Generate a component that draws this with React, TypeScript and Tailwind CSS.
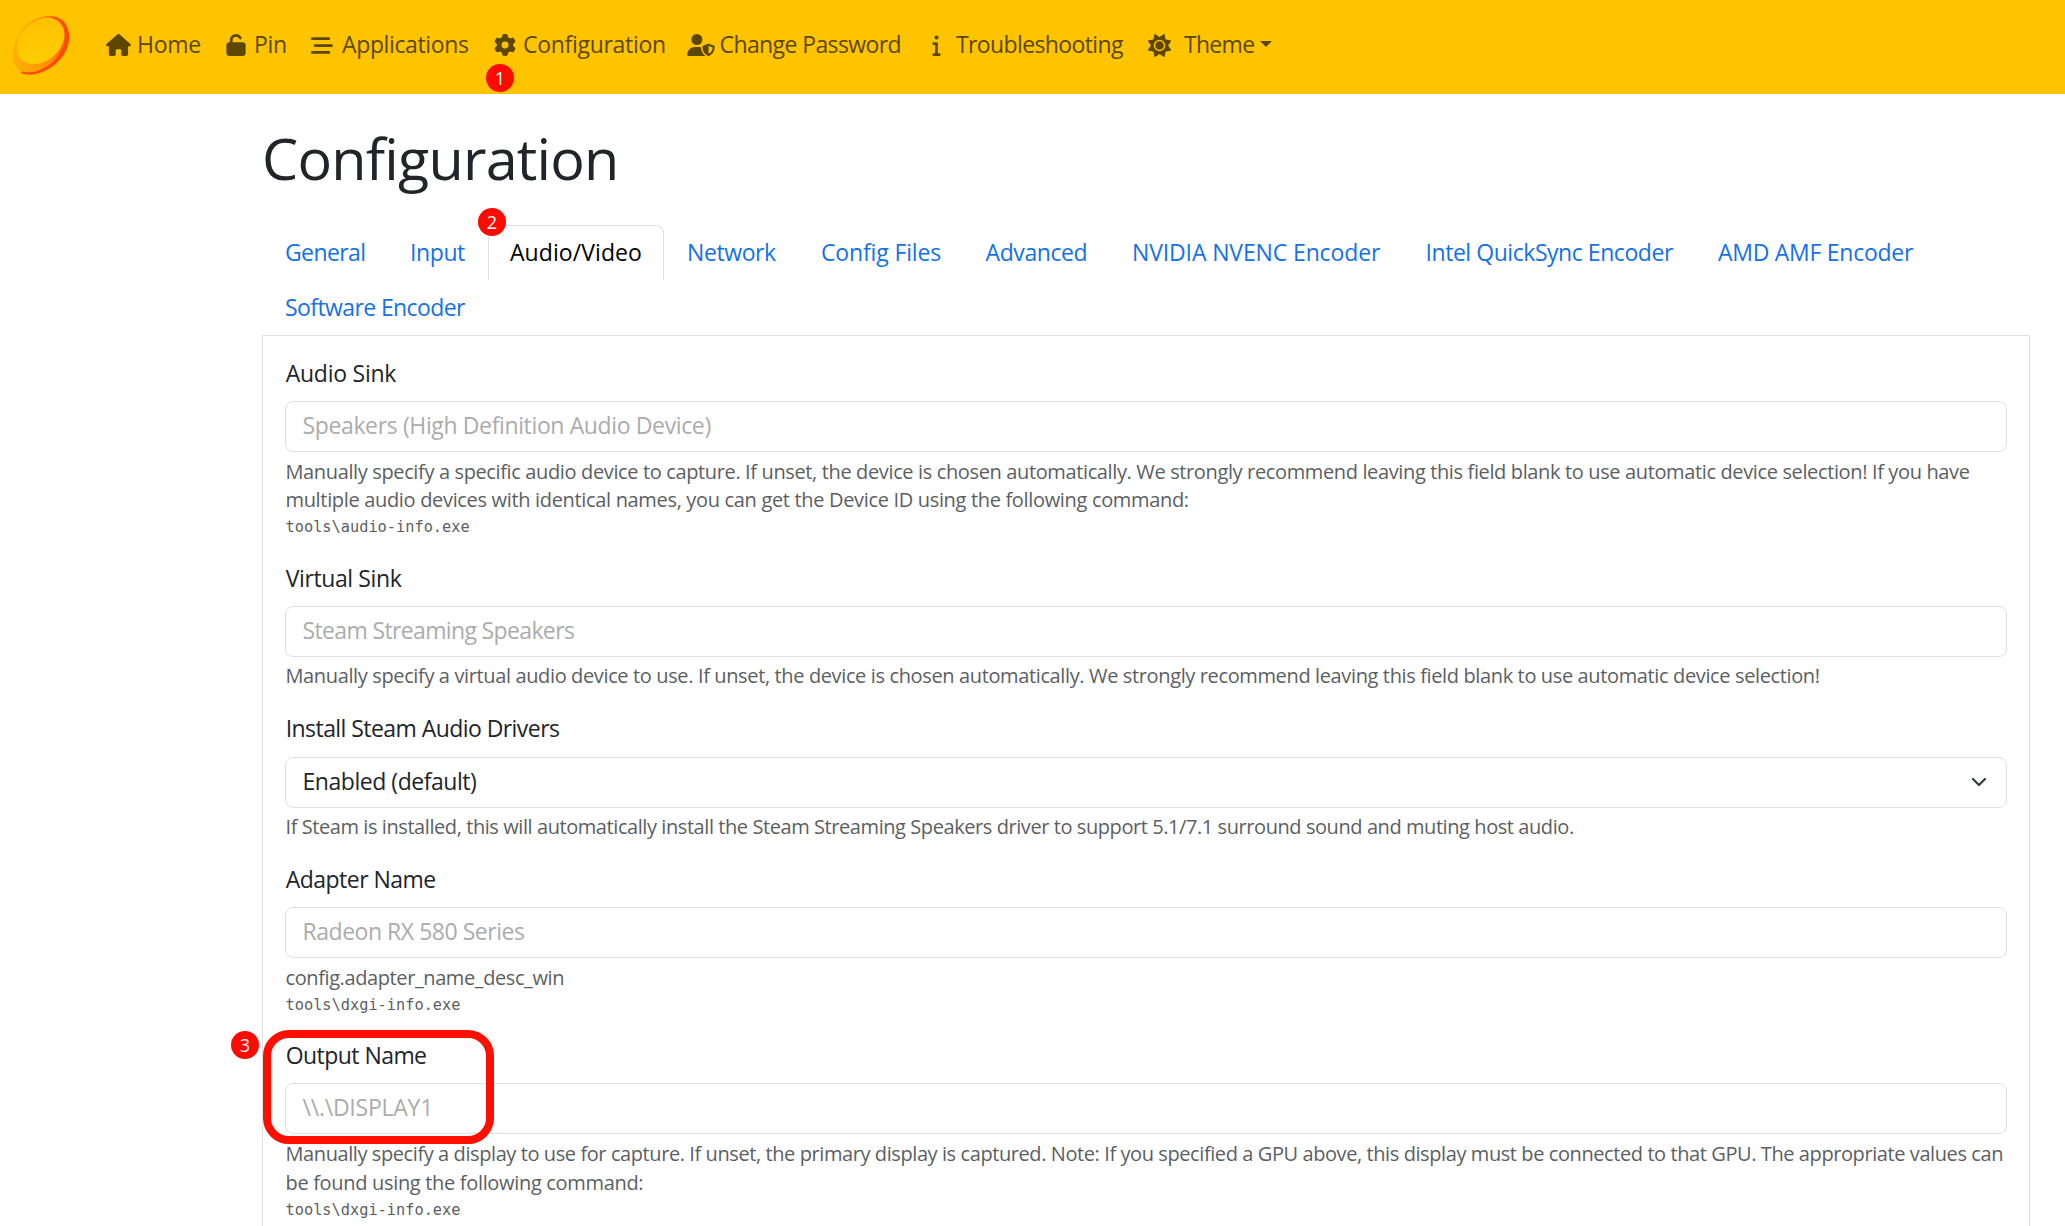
import React from "react";
import type { ReactNode } from "react";
import {
  FaHouse,
  FaUnlock,
  FaBarsStaggered,
  FaGear,
  FaUserShield,
  FaInfo,
  FaSun,
} from "react-icons/fa6";

type NavEntry = { label: string; icon: ReactNode; item: string; slot: string; text: string };

const navEntries: NavEntry[] = [
  { label: "Home", icon: <FaHouse className="h-[22px] w-[25px]" />, item: "w-[120px]", slot: "w-[31px]", text: "tracking-[-0.3px]" },
  { label: "Pin", icon: <FaUnlock className="h-[22px] w-[20px]" />, item: "w-[85px]", slot: "w-[28px]", text: "tracking-[-0.3px]" },
  { label: "Applications", icon: <FaBarsStaggered className="h-[25px] w-[22px]" />, item: "w-[183px]", slot: "w-[31px]", text: "tracking-[-0.37px]" },
  { label: "Configuration", icon: <FaGear className="h-[22px] w-[22px]" />, item: "w-[193px]", slot: "w-[29px]", text: "tracking-[-0.3px]" },
  { label: "Change Password", icon: <FaUserShield className="h-[22px] w-[28px]" />, item: "w-[245px]", slot: "w-[32.5px]", text: "tracking-[-0.6px]" },
  { label: "Troubleshooting", icon: <FaInfo className="h-[22px] w-[9px]" />, item: "w-[216px]", slot: "w-[24px]", text: "tracking-[-0.62px]" },
  { label: "Theme", icon: <FaSun className="h-[23px] w-[23px]" />, item: "w-[130px]", slot: "w-[36px]", text: "tracking-[-0.7px]" },
];

const tabs = [
  { label: "General", cls: "w-[125px] tracking-[-0.6px]" },
  { label: "Input", cls: "w-[101px] tracking-[-0.4px]" },
  { label: "Audio/Video", cls: "w-[176px] tracking-[0.07px]" },
  { label: "Network", cls: "w-[134px] tracking-[-0.4px]" },
  { label: "Config Files", cls: "w-[164.5px] tracking-[-0.14px]" },
  { label: "Advanced", cls: "w-[146.5px] tracking-[-0.4px]" },
  { label: "NVIDIA NVENC Encoder", cls: "w-[293.5px] tracking-[-0.13px]" },
  { label: "Intel QuickSync Encoder", cls: "w-[292.5px] tracking-[-0.45px]" },
  { label: "AMD AMF Encoder", cls: "w-[240px] tracking-[-0.27px]" },
  { label: "Software Encoder", cls: "w-[225px] tracking-[-0.6px]" },
];

function SunshineLogo() {
  return (
    <svg viewBox="0 0 60 62" className="ml-[12px] mt-[-3px] h-[62px] w-[60px]">
      <defs>
        <linearGradient id="rim" x1="0" y1="0.6" x2="1" y2="0.4">
          <stop offset="0.1" stopColor="#ffab06" />
          <stop offset="0.7" stopColor="#ff8a08" />
          <stop offset="1" stopColor="#ff6a00" />
        </linearGradient>
        <linearGradient id="face" x1="0" y1="1" x2="1" y2="0">
          <stop offset="0" stopColor="#ffd000" />
          <stop offset="1" stopColor="#ffbe04" />
        </linearGradient>
      </defs>
      <path d="M21 6C38-3 55 1 57 19C60 44 28 66 9 58Z" fill="#ff4a00" />
      <path d="M20 6C37-3 52 3 53 19C54 43 26 63 9 56C-4 50-1 19 20 6Z" fill="url(#rim)" />
      <ellipse cx="28.5" cy="26" rx="26.5" ry="20" transform="rotate(-42 28.5 26)" fill="url(#face)" />
    </svg>
  );
}

function Marker({ n, pos }: { n: number; pos: string }) {
  return (
    <span
      className={`absolute z-10 flex h-7 w-7 items-center justify-center rounded-full bg-[#ff0a00] text-[18px] leading-none tracking-normal text-white ${pos}`}
    >
      {n}
    </span>
  );
}

type FieldProps = {
  label: string;
  labelCls: string;
  value: string;
  valueCls: string;
  select?: boolean;
  help: { text: string; cls: string }[];
  code?: string;
  children?: ReactNode;
};

function Field({ label, labelCls, value, valueCls, select, help, code, children }: FieldProps) {
  return (
    <div className="relative mb-[19.5px]">
      <label className={`block h-9 pl-[0.7px] leading-9 text-[#212529] ${labelCls}`}>{label}</label>
      <div className="mt-[10.2px] flex h-[51px] items-center justify-between rounded-[8px] border border-[#dee0e2] pb-[3px] pl-[16.5px] pr-[19px]">
        <span className={`whitespace-nowrap ${select ? "text-[#212529]" : "text-[#acacac]"} ${valueCls}`}>{value}</span>
        {select && (
          <svg viewBox="0 0 16 10" className="mt-[2px] h-[10px] w-[16px]" fill="none" stroke="#343a40" strokeWidth="2.2" strokeLinecap="round" strokeLinejoin="round">
            <path d="M2 2l6 6 6-6" />
          </svg>
        )}
      </div>
      <div className="mt-[5.6px] pl-[0.5px] text-[20px] leading-[28.5px] text-[#5c5f62]">
        {help.map((h) => (
          <p key={h.text} className={`whitespace-nowrap ${h.cls}`}>{h.text}</p>
        ))}
        {code && (
          <pre className="h-[25.3px] pt-[0.6px] font-['DejaVu_Sans_Mono',monospace] text-[15.3px] leading-[25.3px]">{code}</pre>
        )}
      </div>
      {children}
    </div>
  );
}

export default function App() {
  return (
    <div className="relative h-[1226px] w-[2065px] overflow-hidden bg-white font-['Open_Sans','Noto_Sans',sans-serif] text-[23px] leading-[34px]">
      <nav className="flex h-[94px] items-center bg-[#ffc400] text-[#5c4700]">
        <div className="w-[106px]">
          <SunshineLogo />
        </div>
        {navEntries.map((e) => (
          <a key={e.label} className={`relative flex h-[88px] items-center pb-[6px] ${e.item}`}>
            <span className={`flex shrink-0 items-center pt-[2px] ${e.slot}`}>{e.icon}</span>
            <span className={`whitespace-nowrap ${e.text}`}>{e.label}</span>
            {e.label === "Configuration" && <Marker n={1} pos="left-[-8px] top-[61px]" />}
            {e.label === "Theme" && (
              <span className="ml-[6px] border-x-[6px] border-t-[6px] border-x-transparent border-t-[#5c4700]" />
            )}
          </a>
        ))}
      </nav>

      <main className="ml-[262px] w-[1768px]">
        <h1 className="mt-[29px] h-[70px] text-[57.5px] leading-[70px] tracking-[-0.78px] text-[#212529]">
          Configuration
        </h1>

        <ul className="mt-8 flex flex-wrap">
          {tabs.map((t) => {
            const active = t.label === "Audio/Video";
            return (
              <li
                key={t.label}
                className={`relative h-[55px] whitespace-nowrap leading-[53px] ${t.cls} ${
                  active
                    ? "rounded-t-[8px] border-x border-t border-[#dee0e2] pl-[21px] text-black"
                    : "pl-[23px] pt-px text-[#1571e6]"
                }`}
              >
                {t.label}
                {active && <Marker n={2} pos="left-[-11px] top-[-18px]" />}
              </li>
            );
          })}
        </ul>

        <section className="h-[920px] border border-[#dee0e2] px-[22px] pt-[19px]">
          <Field
            label="Audio Sink"
            labelCls="tracking-[-0.25px]"
            value="Speakers (High Definition Audio Device)"
            valueCls="tracking-[-0.37px]"
            help={[
              {
                text: "Manually specify a specific audio device to capture. If unset, the device is chosen automatically. We strongly recommend leaving this field blank to use automatic device selection! If you have",
                cls: "tracking-[-0.367px]",
              },
              {
                text: "multiple audio devices with identical names, you can get the Device ID using the following command:",
                cls: "tracking-[-0.33px]",
              },
            ]}
            code="tools\audio-info.exe"
          />
          <Field
            label="Virtual Sink"
            labelCls="tracking-[-0.39px]"
            value="Steam Streaming Speakers"
            valueCls="tracking-[-0.64px]"
            help={[
              {
                text: "Manually specify a virtual audio device to use. If unset, the device is chosen automatically. We strongly recommend leaving this field blank to use automatic device selection!",
                cls: "tracking-[-0.369px]",
              },
            ]}
          />
          <Field
            label="Install Steam Audio Drivers"
            labelCls="tracking-[-0.56px]"
            value="Enabled (default)"
            valueCls="tracking-[-0.46px]"
            select
            help={[
              {
                text: "If Steam is installed, this will automatically install the Steam Streaming Speakers driver to support 5.1/7.1 surround sound and muting host audio.",
                cls: "tracking-[-0.425px]",
              },
            ]}
          />
          <Field
            label="Adapter Name"
            labelCls="tracking-[-0.52px]"
            value="Radeon RX 580 Series"
            valueCls="tracking-[-0.47px]"
            help={[{ text: "config.adapter_name_desc_win", cls: "tracking-[-0.4px]" }]}
            code="tools\dxgi-info.exe"
          />
          <Field
            label="Output Name"
            labelCls="tracking-[-0.55px]"
            value="\\.\DISPLAY1"
            valueCls="tracking-[-0.24px]"
            help={[
              {
                text: "Manually specify a display to use for capture. If unset, the primary display is captured. Note: If you specified a GPU above, this display must be connected to that GPU. The appropriate values can",
                cls: "tracking-[-0.413px]",
              },
              { text: "be found using the following command:", cls: "tracking-[-0.32px]" },
            ]}
            code="tools\dxgi-info.exe"
          >
            <Marker n={3} pos="left-[-54px] top-[-6px]" />
            <span className="absolute left-[-22px] top-[-7px] h-[114px] w-[231px] rounded-[26px] border-8 border-[#ff0f00]" />
          </Field>
        </section>
      </main>
    </div>
  );
}
